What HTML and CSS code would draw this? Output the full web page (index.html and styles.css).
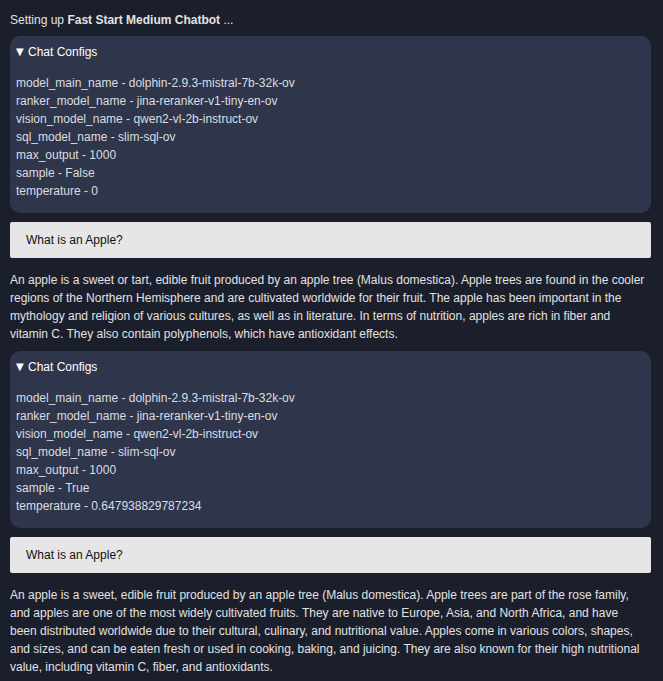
FILE: index.html
```html
<!DOCTYPE html>
<html>
<head>
<meta charset="utf-8">
<link rel="stylesheet" href="styles.css">
</head>
<body>
<div class="page">
  <p class="status">Setting up <b>Fast Start Medium Chatbot</b> ...</p>

  <details class="configs" open>
    <summary class="configs-title"><span class="tri">▼</span>Chat Configs</summary>
    <div class="configs-list">
      <div>model_main_name - dolphin-2.9.3-mistral-7b-32k-ov</div>
      <div>ranker_model_name - jina-reranker-v1-tiny-en-ov</div>
      <div>vision_model_name - qwen2-vl-2b-instruct-ov</div>
      <div>sql_model_name - slim-sql-ov</div>
      <div>max_output - 1000</div>
      <div>sample - False</div>
      <div>temperature - 0</div>
    </div>
  </details>

  <div class="user-msg">What is an Apple?</div>

  <p class="answer">An apple is a sweet or tart, edible fruit produced by an apple tree (Malus domestica). Apple trees are found in the cooler regions of the Northern Hemisphere and are cultivated worldwide for their fruit. The apple has been important in the mythology and religion of various cultures, as well as in literature. In terms of nutrition, apples are rich in fiber and vitamin C. They also contain polyphenols, which have antioxidant effects.</p>

  <details class="configs" open>
    <summary class="configs-title"><span class="tri">▼</span>Chat Configs</summary>
    <div class="configs-list">
      <div>model_main_name - dolphin-2.9.3-mistral-7b-32k-ov</div>
      <div>ranker_model_name - jina-reranker-v1-tiny-en-ov</div>
      <div>vision_model_name - qwen2-vl-2b-instruct-ov</div>
      <div>sql_model_name - slim-sql-ov</div>
      <div>max_output - 1000</div>
      <div>sample - True</div>
      <div>temperature - 0.647938829787234</div>
    </div>
  </details>

  <div class="user-msg">What is an Apple?</div>

  <p class="answer">An apple is a sweet, edible fruit produced by an apple tree (Malus domestica). Apple trees are part of the rose family, and apples are one of the most widely cultivated fruits. They are native to Europe, Asia, and North Africa, and have been distributed worldwide due to their cultural, culinary, and nutritional value. Apples come in various colors, shapes, and sizes, and can be eaten fresh or used in cooking, baking, and juicing. They are also known for their high nutritional value, including vitamin C, fiber, and antioxidants.</p>
</div>
</body>
</html>
```
FILE: styles.css
```css
html, body {
  margin: 0;
  padding: 0;
  background: #1b1e2b;
}
body {
  font-family: "Liberation Sans", Arial, sans-serif;
  font-size: 12px;
  line-height: 18px;
  color: #e2e2e2;
}
.page {
  padding: 11px 12px 0 10px;
  display: flex;
  flex-direction: column;
}
.status {
  margin: 0 0 7px 0;
  color: #e2e2e2;
}
.status b {
  font-weight: bold;
}
.configs {
  background: #2f364b;
  border-radius: 10px;
  padding: 7px 6px 13px 6px;
  margin: 0 0 9px 0;
}
.configs-title {
  list-style: none;
  color: #ffffff;
  cursor: pointer;
  display: flex;
  align-items: center;
  height: 18px;
}
.configs-title::-webkit-details-marker {
  display: none;
}
.tri {
  font-family: "DejaVu Sans", sans-serif;
  font-size: 10px;
  line-height: 18px;
  margin-right: 2px;
  width: 10px;
  display: inline-block;
}
.configs-list {
  margin-top: 13px;
  color: #dcdde0;
}
.user-msg {
  background: #e6e6e6;
  color: #111;
  border-radius: 2px;
  padding: 9px 16px;
  margin: 0 0 13px 0;
}
.answer {
  margin: 0 0 8px 0;
  padding-right: 3px;
  color: #e2e2e2;
}
```
